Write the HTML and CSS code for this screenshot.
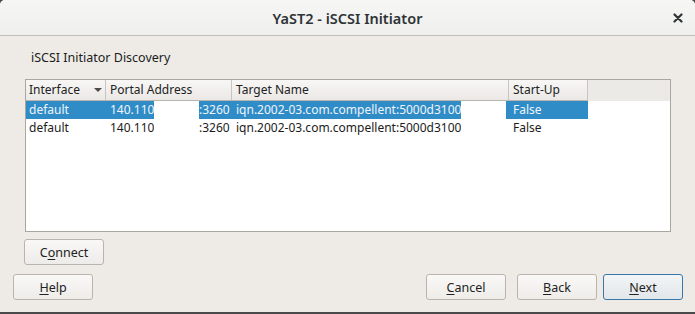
FILE: index.html
```html
<!DOCTYPE html>
<html>
  <head>
    <meta charset='UTF-8'>
    <title>YaST2 - iSCSI Initiator</title>
    <link rel="stylesheet" href="styles.css">
  </head>
  <body>
    <div class='window'>
      <div class='titlebar'>
        <span></span>
        <span class='titlebar__title'>YaST2 - iSCSI Initiator</span>
        <span class='titlebar__close'>
          <svg width='10' height='10' viewBox='0 0 10 10'><path d='M1.5 1.5 L8.5 8.5 M8.5 1.5 L1.5 8.5' stroke='#2e3436' stroke-width='2.2' stroke-linecap='round'/></svg>
        </span>
      </div>

      <div class='content'>
        <div class='label'>iSCSI Initiator Discovery</div>

        <div class='table'>
          <div class='row row--head'>
            <div class='cell cell--iface'>Interface<span class='sort'></span></div>
            <div class='cell cell--portal'>Portal Address</div>
            <div class='cell cell--target'>Target Name</div>
            <div class='cell cell--startup'>Start-Up</div>
          </div>
          <div class='row row--selected'>
            <div class='cell cell--iface'>default</div>
            <div class='cell cell--portal'><span class='ip'>140.110</span><span class='redact redact--ip'></span><span>:3260</span></div>
            <div class='cell cell--target'><span class='iqn'>iqn.2002-03.com.compellent:5000d3100</span><span class='redact redact--iqn'></span></div>
            <div class='cell cell--startup'>False</div>
          </div>
          <div class='row'>
            <div class='cell cell--iface'>default</div>
            <div class='cell cell--portal'><span class='ip'>140.110</span><span class='redact redact--ip'></span><span>:3260</span></div>
            <div class='cell cell--target'><span class='iqn'>iqn.2002-03.com.compellent:5000d3100</span><span class='redact redact--iqn'></span></div>
            <div class='cell cell--startup'>False</div>
          </div>
        </div>

        <div class='connect-row'>
          <div class='btn'>C<u>o</u>nnect</div>
        </div>
      </div>

      <div class='buttons'>
        <div class='btn'><u>H</u>elp</div>
        <div class='buttons__right'>
          <div class='btn'><u>C</u>ancel</div>
          <div class='btn'><u>B</u>ack</div>
          <div class='btn btn--default'><u>N</u>ext</div>
        </div>
      </div>
    </div>
  </body>
</html>
```

FILE: styles.css
```css
html,
body {
	margin: 0;
}

body {
	width: 695px;
	height: 314px;
	background: #4a4a4a;
	font-family: 'Noto Sans', 'DejaVu Sans', sans-serif;
	font-size: 12px;
	color: #1c1c1c;
	overflow: hidden;
}

.window {
	display: flex;
	flex-direction: column;
	width: 695px;
	height: 312px;
	background: #eeebe7;
	border-radius: 5px 5px 0 0;
	overflow: hidden;
}

  .titlebar {
  	display: grid;
  	grid-template-columns: 1fr auto 1fr;
  	align-items: center;
  	height: 35px;
  	background: linear-gradient(to bottom, #f6f6f5 0%, #efefee 100%);
  	border-bottom: 1px solid #c2bfbb;
  }

  .titlebar__title {
  	font-size: 14.5px;
  	font-weight: 600;
  	color: #2e3436;
  }

  .titlebar__close {
  	justify-self: end;
  	display: flex;
  	padding-right: 12px;
  }

  .content {
  	display: flex;
  	flex-direction: column;
  	padding: 14px 0 0 25px;
  }

  .label {
  	height: 16px;
  	line-height: 16px;
  	padding-left: 6px;
  	font-size: 12.5px;
  	margin-bottom: 13px;
  }

  .table {
  	width: 644px;
  	height: 151px;
  	border: 1px solid #aaa6a1;
  	background: #fff;
  }

    .row {
    	display: flex;
    	width: 562px;
    	height: 18px;
    	line-height: 18px;
    	white-space: nowrap;
    }

    .row--head {
    	width: 644px;
    	height: 21px;
    	line-height: 20px;
    	background: #eceae6;
    	color: #222;
    }

    .row--head .cell {
    	background: linear-gradient(to bottom, #f8f7f6 0%, #ebe8e5 100%);
    	border-right: 1px solid #c8c4bf;
    	border-bottom: 1px solid #b9b5b0;
    	box-sizing: border-box;
    	height: 21px;
    }

    .row--selected {
    	background: #308cc6;
    	color: #eef5fb;
    }

    .cell {
    	display: flex;
    	align-items: center;
    	padding-left: 3px;
    	box-sizing: border-box;
    	overflow: hidden;
    }

    .cell--iface {
    	width: 80px;
    	position: relative;
    }

    .cell--portal {
    	width: 126px;
    	padding-left: 4px;
    }

    .cell--target {
    	width: 277px;
    	padding-left: 4px;
    }

    .cell--startup {
    	width: 79px;
    	padding-left: 4px;
    }

    .sort {
    	position: absolute;
    	left: 68px;
    	top: 8px;
    	width: 0;
    	height: 0;
    	border-left: 4px solid transparent;
    	border-right: 4px solid transparent;
    	border-top: 4px solid #4a4a4a;
    }

    .ip {
    	width: 44px;
    }

    .iqn {
    	min-width: 225px;
    }

    .redact {
    	height: 18px;
    	background: #fff;
    }

    .redact--ip {
    	width: 45px;
    }

    .redact--iqn {
    	width: 45px;
    }

  .connect-row {
  	display: flex;
  	margin-top: 7px;
  	margin-left: -1px;
  }

  .buttons {
  	display: flex;
  	justify-content: space-between;
  	margin-top: 9px;
  	padding: 0 12px 0 13px;
  }

    .buttons__right {
    	display: flex;
    	gap: 11px;
    }

    .buttons__right .btn--default {
    	margin-left: -5px;
    }

  .btn {
  	display: flex;
  	align-items: center;
  	justify-content: center;
  	width: 80px;
  	height: 26px;
  	box-sizing: border-box;
  	border: 1px solid #b9b4ae;
  	border-radius: 3px;
  	background: linear-gradient(to bottom, #f9f8f7 0%, #eeece9 100%);
  	font-size: 12.5px;
  	color: #222;
  }

  .btn u {
  	text-decoration-thickness: 1px;
  	text-underline-offset: 2px;
  }

  .btn--default {
  	border-color: #3a77a6;
  	background: linear-gradient(to bottom, #f3f5f6 0%, #e1e6ea 100%);
  }
```
